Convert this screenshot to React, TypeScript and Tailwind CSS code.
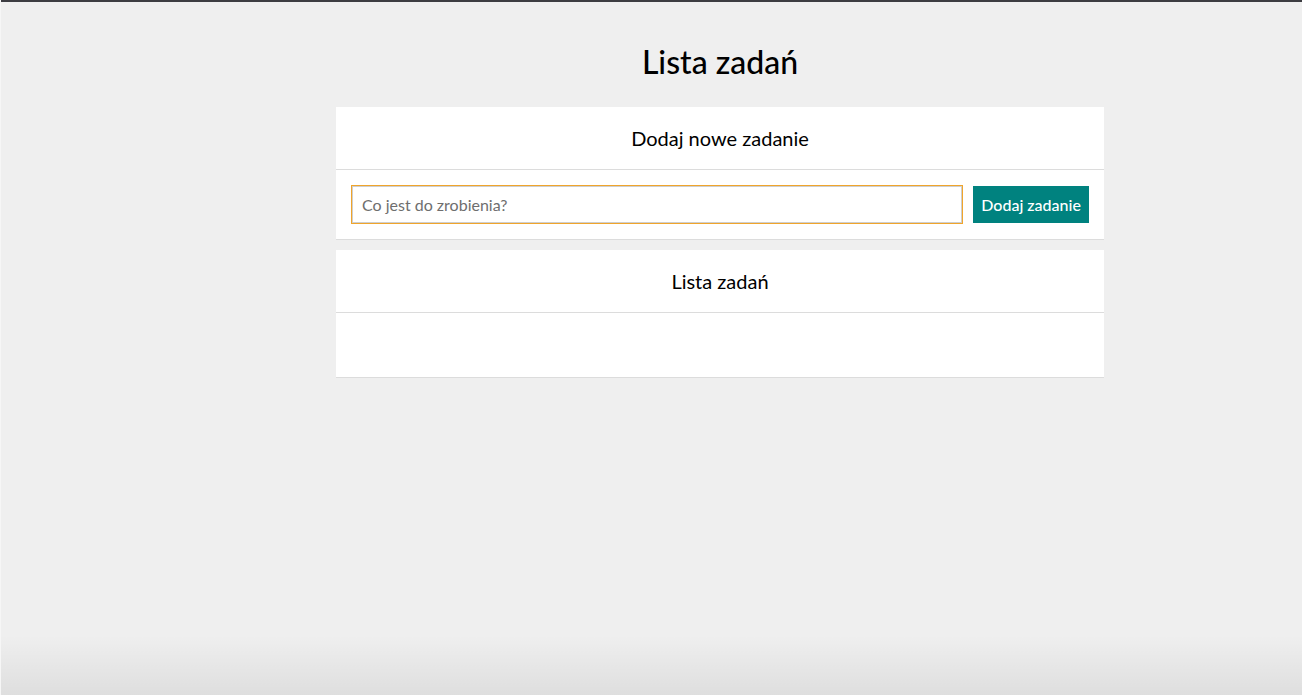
import React from "react";

export default function App() {
  return (
    <div
      className="relative w-[1302px] h-[695px] overflow-hidden bg-[#efefef] text-black"
      style={{ fontFamily: "Lato, 'Open Sans', sans-serif" }}
    >
      <div className="h-[2px] bg-[#3c3c41]" />
      <div className="pl-[138px]">
        <div className="mx-auto w-[768px]">
          <h1 className="pt-[41px] h-[105px] text-[32px] leading-[38px] text-center font-medium">
            Lista zadań
          </h1>
          <section className="bg-white border-b border-[#dcdcdc]">
            <div className="h-[63px] flex items-center justify-center text-[20px] border-b border-[#dcdcdc]">
              Dodaj nowe zadanie
            </div>
            <div className="flex items-center gap-[10px] px-[15px] pt-[15px] pb-[15px]">
              <div className="w-[613px] h-[39px] border border-[#f0a52c]">
                <input
                  className="block w-full h-full border border-[#cfcfcf] px-[9px] text-[16px] text-[#333] outline-none placeholder:text-[#6e6e6e]"
                  placeholder="Co jest do zrobienia?"
                />
              </div>
              <button className="w-[116px] h-[37px] bg-[#00827f] text-white text-[16px] font-medium">
                Dodaj zadanie
              </button>
            </div>
          </section>
          <section className="mt-[10px] bg-white border-b border-[#dcdcdc]">
            <div className="h-[63px] flex items-center justify-center text-[20px] border-b border-[#dcdcdc]">
              Lista zadań
            </div>
            <div className="h-[64px]" />
          </section>
        </div>
      </div>
      <div className="absolute left-0 right-0 bottom-0 h-[60px] bg-gradient-to-b from-transparent to-[rgba(0,0,0,0.07)] pointer-events-none" />
      <div className="absolute left-0 top-0 bottom-0 w-[1px] bg-[#f6f6f6]" />
    </div>
  );
}
